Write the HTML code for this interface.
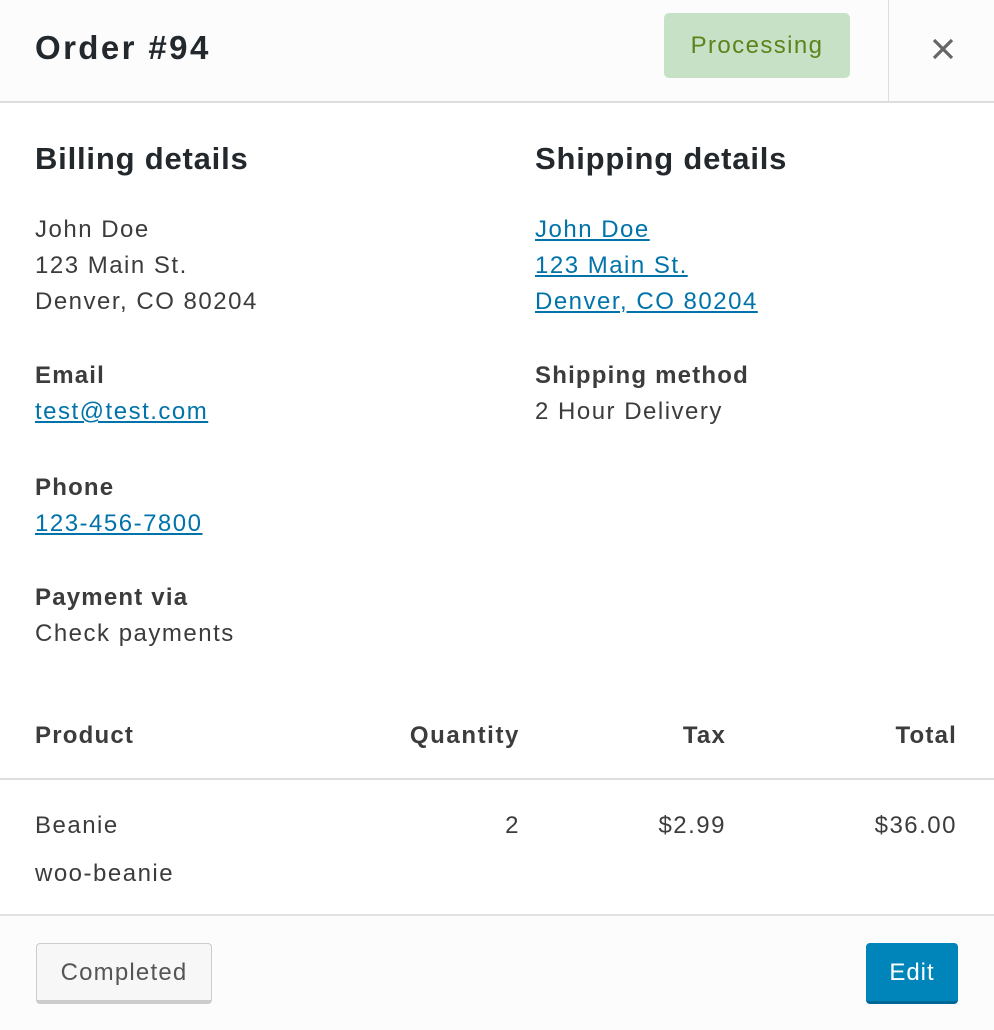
<!DOCTYPE html>
<html><head><style>
body{margin:0;width:994px;height:1028px;background:#fff;font-family:"Liberation Sans",sans-serif;color:#3c3c3c;position:relative;overflow:hidden}
.a{position:absolute;white-space:nowrap}
.t{font-size:24px;line-height:36px;letter-spacing:1.5px}
.b{font-weight:bold;letter-spacing:1.2px}
a{color:#0073aa;text-decoration:underline}
</style></head><body>
<div class="a" style="left:0;top:0;width:994px;height:101px;background:#fcfcfc;border-bottom:2px solid #dddddd"></div>
<div class="a" style="left:888px;top:0;width:1px;height:101px;background:#ddd"></div>
<div class="a" style="left:35px;top:28px;font-weight:bold;font-size:33px;line-height:40px;color:#23282d;letter-spacing:2.4px">Order #94</div>
<div class="a" style="left:664px;top:13px;width:186px;height:65px;background:#c6e1c6;border-radius:5px;color:#5b841b;font-size:24px;line-height:65px;text-align:center;letter-spacing:1.4px">Processing</div>
<svg class="a" style="left:932px;top:38px" width="22" height="22" viewBox="0 0 22 22"><path d="M2 2L20 20M20 2L2 20" stroke="#666" stroke-width="3.2"/></svg>

<div class="a" style="left:35px;top:139px;font-weight:bold;font-size:31px;line-height:40px;color:#23282d;letter-spacing:0.8px">Billing details</div>
<div class="a" style="left:535px;top:139px;font-weight:bold;font-size:31px;line-height:40px;color:#23282d;letter-spacing:0.8px">Shipping details</div>

<div class="a t" style="left:35px;top:212px">John Doe<br>123 Main St.<br>Denver, CO 80204</div>
<div class="a t" style="left:535px;top:212px"><a>John Doe</a><br><a>123 Main St.</a><br><a>Denver, CO 80204</a></div>

<div class="a t b" style="left:35px;top:358px">Email</div>
<div class="a t" style="left:35px;top:394px"><a>test@test.com</a></div>
<div class="a t b" style="left:535px;top:358px">Shipping method</div>
<div class="a t" style="left:535px;top:394px">2 Hour Delivery</div>
<div class="a t b" style="left:35px;top:470px">Phone</div>
<div class="a t" style="left:35px;top:506px"><a>123-456-7800</a></div>
<div class="a t b" style="left:35px;top:580px">Payment via</div>
<div class="a t" style="left:35px;top:616px">Check payments</div>

<div class="a t b" style="left:35px;top:718px">Product</div>
<div class="a t b" style="right:474px;top:718px;letter-spacing:1.6px">Quantity</div>
<div class="a t b" style="right:268px;top:718px">Tax</div>
<div class="a t b" style="right:37px;top:718px">Total</div>
<div class="a" style="left:0;top:778px;width:994px;height:2px;background:#ddd"></div>
<div class="a t" style="left:35px;top:808px">Beanie</div>
<div class="a t" style="left:35px;top:856px">woo-beanie</div>
<div class="a t" style="right:474px;top:808px">2</div>
<div class="a t" style="right:268px;top:808px">$2.99</div>
<div class="a t" style="right:37px;top:808px">$36.00</div>

<div class="a" style="left:0;top:914px;width:994px;height:114px;background:#fcfcfc;border-top:2px solid #e2e2e2"></div>
<div class="a" style="left:36px;top:943px;width:176px;height:61px;background:#f7f7f7;border:1px solid #ccc;border-bottom:4px solid #ccc;border-radius:4px;box-sizing:border-box;font-size:24px;line-height:58px;text-align:center;color:#555;letter-spacing:1.2px">Completed</div>
<div class="a" style="left:866px;top:943px;width:92px;height:61px;background:#0085ba;border-bottom:3px solid #006799;border-radius:4px;box-sizing:border-box;font-size:24px;line-height:60px;text-align:center;color:#fff;letter-spacing:1px">Edit</div>
</body></html>
